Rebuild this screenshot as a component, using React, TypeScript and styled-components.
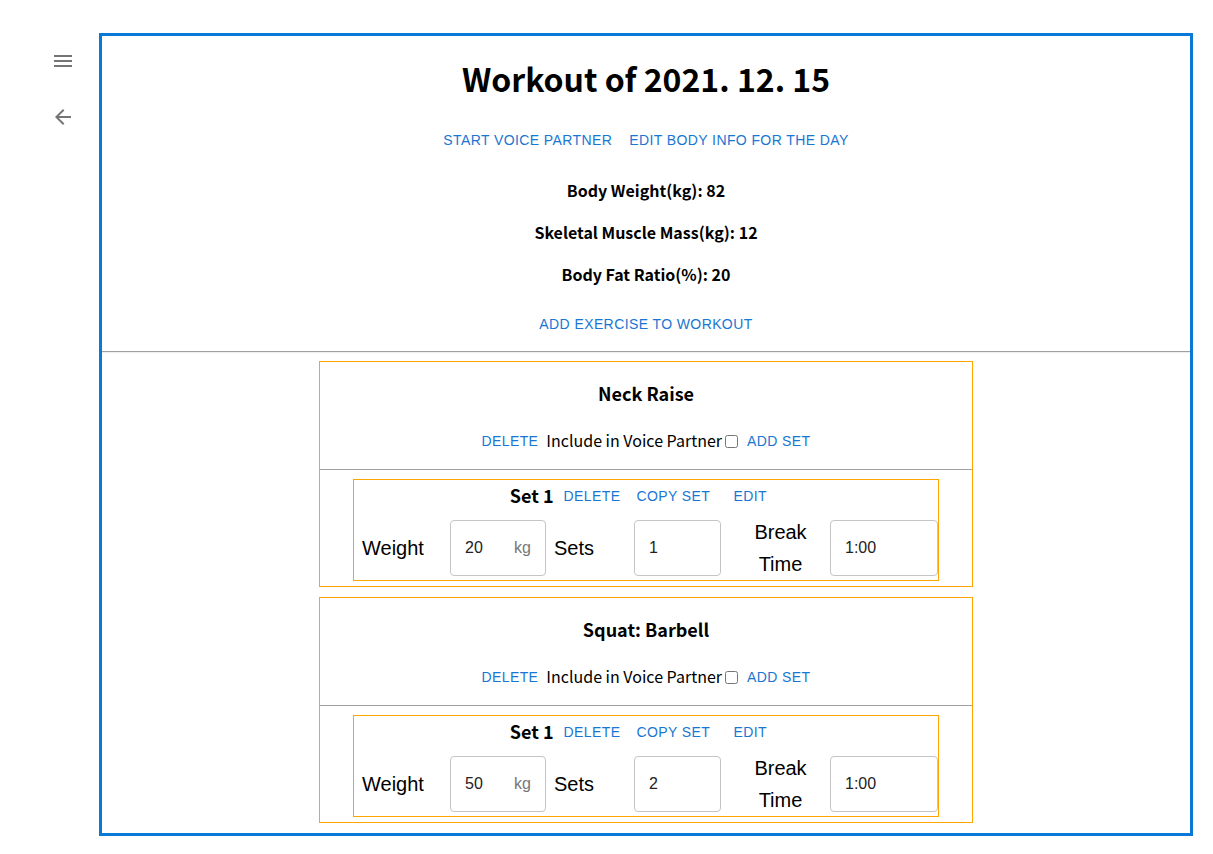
import React from "react";
import styled, { createGlobalStyle } from "styled-components";

const GlobalStyle = createGlobalStyle`
  body {
    margin: 0;
    background: #fff;
    font-family: "Noto Sans CJK KR", "Noto Sans", sans-serif;
    color: #000;
  }
`;

const Page = styled.div`
  display: flex;
  align-items: flex-start;
  width: 1213px;
`;

const Side = styled.div`
  width: 99px;
  flex: none;
  display: flex;
  flex-direction: column;
  align-items: flex-start;
  padding: 49px 0 0 51px;
  box-sizing: border-box;
  gap: 32px;
  color: #757575;
`;

const Icon = styled.svg`
  width: 24px;
  height: 24px;
  fill: currentColor;
  display: block;
`;

const Frame = styled.main`
  margin-top: 33px;
  width: 1094px;
  height: 803px;
  box-sizing: border-box;
  border: 3px solid #0a78d7;
  overflow: hidden;
  display: flex;
  flex-direction: column;
  align-items: center;
`;

const Title = styled.h1`
  margin: 22px 0 0;
  font-size: 32px;
  line-height: 40px;
  font-weight: 700;
`;

const LinkRow = styled.div`
  display: flex;
  margin-top: 24px;
  gap: 1px;
`;

const TextButton = styled.button`
  border: 0;
  background: none;
  margin: 0;
  padding: 6px 8px;
  min-width: 64px;
  height: 36px;
  box-sizing: border-box;
  font-family: "Liberation Sans", Arial, sans-serif;
  font-size: 14px;
  line-height: 24px;
  letter-spacing: 0.02857em;
  text-transform: uppercase;
  color: #1976d2;
  cursor: pointer;
  display: inline-flex;
  align-items: center;
  justify-content: center;
`;

const Stats = styled.div`
  display: flex;
  flex-direction: column;
  align-items: center;
  gap: 20px;
  margin-top: 21px;
`;

const Stat = styled.p`
  margin: 0;
  font-size: 16px;
  line-height: 22px;
  font-weight: 700;
`;

const AddRow = styled.div`
  margin-top: 21px;
`;

const Rule = styled.hr`
  align-self: stretch;
  margin: 9px 0 0;
  border: 0;
  border-top: 1px solid #a0a0a0;
  border-bottom: 1px solid #eee;
`;

const List = styled.div`
  display: flex;
  flex-direction: column;
  gap: 10px;
  padding-top: 8px;
`;

const Card = styled.section`
  width: 654px;
  box-sizing: border-box;
  border: 1px solid #ffa500;
  display: flex;
  flex-direction: column;
  align-items: center;
  padding-bottom: 5px;
`;

const CardTitle = styled.h3`
  margin: 19px 0 0;
  font-size: 18px;
  line-height: 24px;
  font-weight: 700;
`;

const CardActions = styled.div`
  margin-top: 18px;
  display: flex;
  align-items: center;
`;

const IncludeText = styled.span`
  font-size: 16px;
  line-height: 24px;
  margin-top: -2px;
`;

const Check = styled.input`
  width: 13px;
  height: 13px;
  margin: 3px 1px 3px 3px;
`;

const CardRule = styled.div`
  align-self: stretch;
  margin-top: 10px;
  border-top: 1px solid #a0a0a0;
`;

const SetBox = styled.div`
  margin-top: 9px;
  width: 586px;
  box-sizing: border-box;
  border: 1px solid #ffa500;
  display: flex;
  flex-direction: column;
  align-items: center;
`;

const SetHead = styled.div`
  display: flex;
  align-items: center;
  height: 36px;
  padding-bottom: 4px;
  box-sizing: border-box;
`;

const SetTitle = styled.span`
  font-size: 18px;
  font-weight: 700;
  line-height: 24px;
  margin-right: 2px;
  margin-top: -2px;
`;

const SetRow = styled.div`
  align-self: stretch;
  display: flex;
  align-items: center;
  height: 64px;
`;

const Label = styled.div<{ $w: number; $center?: boolean }>`
  width: ${(p) => p.$w}px;
  box-sizing: border-box;
  padding-left: ${(p) => (p.$center ? 10 : 8)}px;
  text-align: ${(p) => (p.$center ? "center" : "left")};
  font-family: "Liberation Sans", Arial, sans-serif;
  font-size: 20px;
  line-height: 32px;
  flex: none;
`;

const Field = styled.div<{ $w: number }>`
  width: ${(p) => p.$w}px;
  height: 56px;
  box-sizing: border-box;
  border: 1px solid #c4c4c4;
  border-radius: 4px;
  display: flex;
  align-items: center;
  justify-content: space-between;
  padding: 0 14px;
  font-family: "Liberation Sans", Arial, sans-serif;
  font-size: 16px;
  color: #222;
  flex: none;
`;

const Unit = styled.span`
  color: #777;
`;

const MenuIcon = () => (
  <Icon viewBox="0 0 24 24">
    <path d="M3 18h18v-2H3v2zm0-5h18v-2H3v2zm0-7v2h18V6H3z" />
  </Icon>
);

const BackIcon = () => (
  <Icon viewBox="0 0 24 24">
    <path d="M20 11H7.83l5.59-5.59L12 4l-8 8 8 8 1.41-1.41L7.83 13H20v-2z" />
  </Icon>
);

type Exercise = { name: string; weight: number; sets: number; rest: string };

const exercises: Exercise[] = [
  { name: "Neck Raise", weight: 20, sets: 1, rest: "1:00" },
  { name: "Squat: Barbell", weight: 50, sets: 2, rest: "1:00" },
];

function ExerciseCard({ ex }: { ex: Exercise }) {
  return (
    <Card>
      <CardTitle>{ex.name}</CardTitle>
      <CardActions>
        <TextButton>Delete</TextButton>
        <IncludeText>Include in Voice Partner</IncludeText>
        <Check type="checkbox" />
        <TextButton>Add set</TextButton>
      </CardActions>
      <CardRule />
      <SetBox>
        <SetHead>
          <SetTitle>Set 1</SetTitle>
          <TextButton>Delete</TextButton>
          <TextButton>Copy set</TextButton>
          <TextButton>Edit</TextButton>
        </SetHead>
        <SetRow>
          <Label $w={96}>Weight</Label>
          <Field $w={96}>
            <span>{ex.weight}</span>
            <Unit>kg</Unit>
          </Field>
          <Label $w={88}>Sets</Label>
          <Field $w={87}>
            <span>{ex.sets}</span>
          </Field>
          <Label $w={109} $center>
            Break
            <br />
            Time
          </Label>
          <Field $w={108}>
            <span>{ex.rest}</span>
          </Field>
        </SetRow>
      </SetBox>
    </Card>
  );
}

export default function App() {
  return (
    <>
      <GlobalStyle />
      <Page>
        <Side>
          <MenuIcon />
          <BackIcon />
        </Side>
        <Frame>
          <Title>Workout of 2021. 12. 15</Title>
          <LinkRow>
            <TextButton>Start voice partner</TextButton>
            <TextButton>Edit body info for the day</TextButton>
          </LinkRow>
          <Stats>
            <Stat>Body Weight(kg): 82</Stat>
            <Stat>Skeletal Muscle Mass(kg): 12</Stat>
            <Stat>Body Fat Ratio(%): 20</Stat>
          </Stats>
          <AddRow>
            <TextButton>Add exercise to workout</TextButton>
          </AddRow>
          <Rule />
          <List>
            {exercises.map((ex) => (
              <ExerciseCard key={ex.name} ex={ex} />
            ))}
          </List>
        </Frame>
      </Page>
    </>
  );
}
